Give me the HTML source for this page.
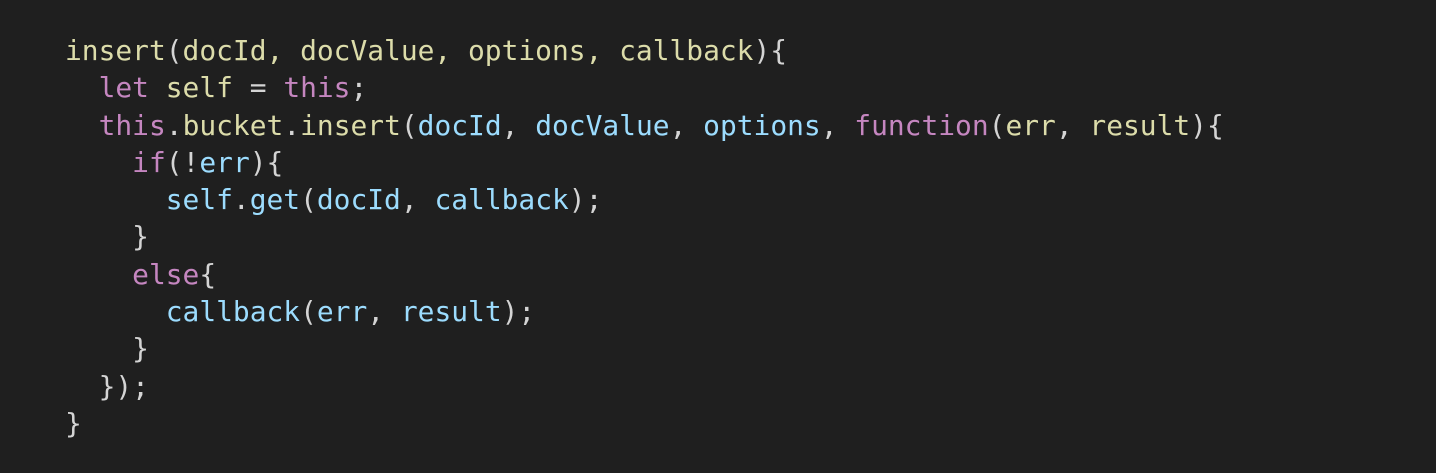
<!DOCTYPE html>
<html><head><style>
html,body{margin:0;width:1436px;height:473px;background:#1f1f1f;overflow:hidden}
pre{margin:0;position:absolute;left:65px;top:32px;font-family:"DejaVu Sans Mono","Liberation Mono",monospace;font-size:27.9px;line-height:37.3px;color:#d4d4d4}
.y{color:#dcdcaa}.p{color:#c586c0}.b{color:#9cdcfe}
</style></head><body><pre><span class="y">insert</span>(<span class="y">docId, docValue, options, callback</span>){
  <span class="p">let</span> <span class="y">self</span> = <span class="p">this</span>;
  <span class="p">this</span>.<span class="y">bucket</span>.<span class="y">insert</span>(<span class="b">docId</span>, <span class="b">docValue</span>, <span class="b">options</span>, <span class="p">function</span>(<span class="y">err</span>, <span class="y">result</span>){
    <span class="p">if</span>(!<span class="b">err</span>){
      <span class="b">self</span>.<span class="b">get</span>(<span class="b">docId</span>, <span class="b">callback</span>);
    }
    <span class="p">else</span>{
      <span class="b">callback</span>(<span class="b">err</span>, <span class="b">result</span>);
    }
  });
}</pre></body></html>
